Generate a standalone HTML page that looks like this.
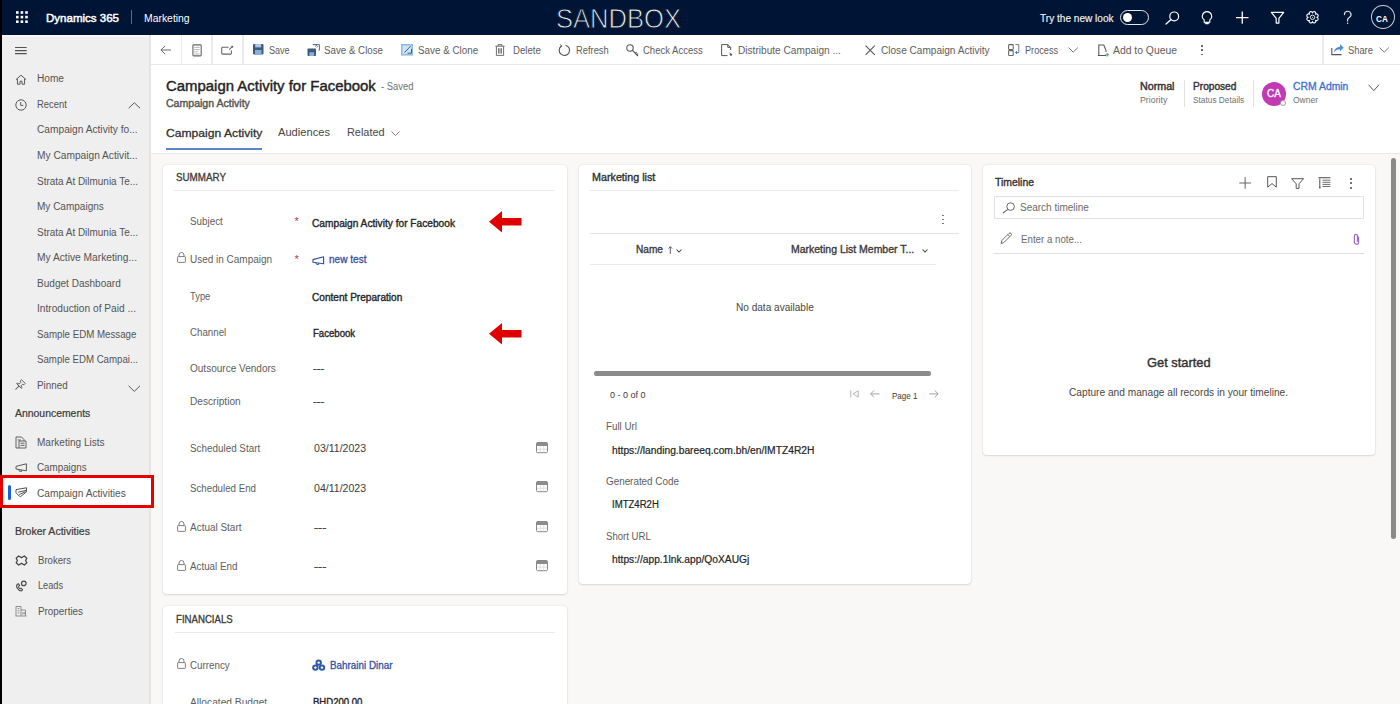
<!DOCTYPE html>
<html><head><meta charset="utf-8"><title>Campaign Activity</title>
<style>
*{box-sizing:border-box;margin:0;padding:0}
html,body{width:1400px;height:704px;overflow:hidden;background:#f9f8f7;font-family:"Liberation Sans",sans-serif;color:#323130;position:relative}
.abs{position:absolute}
.t{position:absolute;white-space:nowrap;line-height:1}
.card{position:absolute;background:#fff;border-radius:4px;box-shadow:0 0 2px rgba(0,0,0,0.12),0 1px 2px rgba(0,0,0,0.10)}
svg{position:absolute;overflow:visible}
</style></head><body>
<div class="abs" style="left:0px;top:0px;width:1400px;height:35px;background:#001535"></div>
<div class="abs" style="left:2px;top:35px;width:148px;height:669px;background:#efefef"></div>
<div class="abs" style="left:2px;top:35px;width:148px;height:2px;background:#f7f7f7"></div>
<div class="abs" style="left:149px;top:35px;width:2px;height:669px;background:#e4e4e4"></div>
<div class="abs" style="left:0px;top:0px;width:2px;height:704px;background:#000"></div>
<div class="abs" style="left:151px;top:35px;width:1249px;height:29px;background:#fff"></div>
<div class="abs" style="left:151px;top:64px;width:1249px;height:1px;background:#e6e6e6"></div>
<div class="abs" style="left:151px;top:65px;width:1249px;height:88px;background:#fff"></div>
<div class="abs" style="left:151px;top:153px;width:1249px;height:1px;background:#e9e8e7"></div>
<div class="card" style="left:163px;top:165px;width:404px;height:429px"></div>
<div class="card" style="left:163px;top:606px;width:404px;height:140px"></div>
<div class="card" style="left:578.5px;top:165px;width:392.5px;height:419px"></div>
<div class="card" style="left:983px;top:165px;width:392px;height:290px"></div>
<div class="abs" style="left:1391px;top:158px;width:5px;height:381px;background:#8a8a8a;border-radius:3px"></div>
<svg class="abs" style="left:0;top:0" width="40" height="34"><rect x="16.0" y="11.2" width="2.6" height="2.6" fill="#fff"/><rect x="16.0" y="15.8" width="2.6" height="2.6" fill="#fff"/><rect x="16.0" y="20.4" width="2.6" height="2.6" fill="#fff"/><rect x="20.6" y="11.2" width="2.6" height="2.6" fill="#fff"/><rect x="20.6" y="15.8" width="2.6" height="2.6" fill="#fff"/><rect x="20.6" y="20.4" width="2.6" height="2.6" fill="#fff"/><rect x="25.2" y="11.2" width="2.6" height="2.6" fill="#fff"/><rect x="25.2" y="15.8" width="2.6" height="2.6" fill="#fff"/><rect x="25.2" y="20.4" width="2.6" height="2.6" fill="#fff"/></svg>
<div class="t" style="left:45.7px;top:13.29px;font-size:11px;color:#fff;-webkit-text-stroke:0.45px #fff;transform:scaleX(1.0474);transform-origin:0 0;">Dynamics 365</div>
<div class="abs" style="left:131px;top:10px;width:1px;height:14px;background:#5a6b85"></div>
<div class="t" style="left:143.6px;top:14.00px;font-size:10.4px;color:#fff;transform:scaleX(1.0008);transform-origin:0 0;">Marketing</div>
<div class="t" style="left:555.5px;top:4.72px;font-size:27.5px;color:#ecece6;transform:scaleX(0.9295);transform-origin:0 0;-webkit-text-stroke:0.9px #001535;paint-order:normal;">SANDBOX</div>
<div class="t" style="left:1040.3px;top:13.97px;font-size:10.2px;color:#f2f2f2;-webkit-text-stroke:0.15px #f2f2f2;transform:scaleX(0.9899);transform-origin:0 0;">Try the new look</div>
<div class="abs" style="left:1119.7px;top:9.7px;width:29.2px;height:15.7px;border:1.3px solid #e8e8e8;border-radius:8px"></div>
<div class="abs" style="left:1122.6px;top:13.2px;width:9px;height:9px;background:#fff;border-radius:50%"></div>
<svg class="abs" style="left:1160px;top:6px;" width="24" height="24" viewBox="0 0 24 24" fill="none"><circle cx="14.2" cy="10.4" r="4.4" stroke="#fff" stroke-width="1.2"/><path d="M11.1 13.5 L6 18" stroke="#fff" stroke-width="1.3" stroke-linecap="round"/></svg>
<svg class="abs" style="left:1196px;top:6px;" width="22" height="22" viewBox="0 0 22 22" fill="none"><path d="M11 5.6 a4.6 4.6 0 0 1 2.8 8.3 v2.4 h-5.6 v-2.4 A4.6 4.6 0 0 1 11 5.6 z" stroke="#fff" stroke-width="1.1"/><path d="M8.6 16.9 h4.8 M9.4 17.6 h3.2" stroke="#fff" stroke-width="1.1"/></svg>
<svg class="abs" style="left:1232px;top:6px;" width="22" height="22" viewBox="0 0 22 22" fill="none"><path d="M4 11.7 h12.5 M10.25 5.6 v12.2" stroke="#fff" stroke-width="1.3"/></svg>
<svg class="abs" style="left:1268px;top:6px;" width="22" height="22" viewBox="0 0 22 22" fill="none"><path d="M3.4 6.3 h12.3 l-4.8 6 v4.8 h-2.7 v-4.8 z" stroke="#fff" stroke-width="1.2" stroke-linejoin="round"/></svg>
<svg class="abs" style="left:1300px;top:6px;" width="25" height="24" viewBox="0 0 25 24" fill="none"><path d="M16.80 11.30 A1.68 1.68 0 1 1 15.54 14.34 A1.68 1.68 0 1 1 12.50 15.60 A1.68 1.68 0 1 1 9.46 14.34 A1.68 1.68 0 1 1 8.20 11.30 A1.68 1.68 0 1 1 9.46 8.26 A1.68 1.68 0 1 1 12.50 7.00 A1.68 1.68 0 1 1 15.54 8.26 A1.68 1.68 0 1 1 16.80 11.30 Z" stroke="#fff" stroke-width="1.1" stroke-linejoin="round"/><circle cx="12.5" cy="11.3" r="2.2" stroke="#e8e8f0" stroke-width="1"/><circle cx="12.5" cy="11.3" r="0.5" fill="#fff"/></svg>
<svg class="abs" style="left:1340px;top:6px;" width="16" height="20" viewBox="0 0 16 20" fill="none"><path d="M4.4 8.6 A3.3 3.3 0 1 1 9.2 11.5 C8.1 12.2 7.6 12.8 7.6 14 V15" stroke="#e8e8f0" stroke-width="1.15" stroke-linecap="round"/><circle cx="7.6" cy="17.2" r="0.7" fill="#e8e8f0"/></svg>
<div class="abs" style="left:1370.5px;top:5.4px;width:24.2px;height:24px;border:1.3px solid #c8ccd4;border-radius:50%"></div>
<div class="t" style="left:1376.3px;top:14.67px;font-size:8.3px;color:#fff;font-weight:700;transform:scaleX(0.9843);transform-origin:0 0;">CA</div>
<svg class="abs" style="left:15px;top:44px;" width="12" height="12" viewBox="0 0 12 12" fill="none"><path d="M0 3.5 h11.7 M0 6.6 h11.7 M0 9.6 h11.7" stroke="#555" stroke-width="1.2"/></svg>
<div class="t" style="left:37.3px;top:74.44px;font-size:10px;color:#555453;transform:scaleX(1.0122);transform-origin:0 0;">Home</div>
<div class="t" style="left:37.3px;top:99.95px;font-size:10px;color:#555453;transform:scaleX(0.9405);transform-origin:0 0;">Recent</div>
<div class="t" style="left:37.3px;top:125.47px;font-size:10px;color:#555453;transform:scaleX(1.0179);transform-origin:0 0;">Campaign Activity fo...</div>
<div class="t" style="left:37.3px;top:151.00px;font-size:10px;color:#555453;transform:scaleX(1.0180);transform-origin:0 0;">My Campaign Activit...</div>
<div class="t" style="left:37.3px;top:176.52px;font-size:10px;color:#555453;transform:scaleX(0.9948);transform-origin:0 0;">Strata At Dilmunia Te...</div>
<div class="t" style="left:37.3px;top:202.03px;font-size:10px;color:#555453;transform:scaleX(1.0017);transform-origin:0 0;">My Campaigns</div>
<div class="t" style="left:37.3px;top:227.56px;font-size:10px;color:#555453;transform:scaleX(0.9948);transform-origin:0 0;">Strata At Dilmunia Te...</div>
<div class="t" style="left:37.3px;top:253.07px;font-size:10px;color:#555453;transform:scaleX(1.0224);transform-origin:0 0;">My Active Marketing...</div>
<div class="t" style="left:37.3px;top:278.60px;font-size:10px;color:#555453;transform:scaleX(1.0049);transform-origin:0 0;">Budget Dashboard</div>
<div class="t" style="left:37.3px;top:304.12px;font-size:10px;color:#555453;transform:scaleX(1.0177);transform-origin:0 0;">Introduction of Paid ...</div>
<div class="t" style="left:37.3px;top:329.64px;font-size:10px;color:#555453;transform:scaleX(0.9720);transform-origin:0 0;">Sample EDM Message</div>
<div class="t" style="left:37.3px;top:355.16px;font-size:10px;color:#555453;transform:scaleX(0.9667);transform-origin:0 0;">Sample EDM Campai...</div>
<div class="t" style="left:37.3px;top:380.68px;font-size:10px;color:#555453;transform:scaleX(0.9827);transform-origin:0 0;">Pinned</div>
<svg class="abs" style="left:15px;top:74px;" width="12" height="11" viewBox="0 0 12 11" fill="none"><path d="M1 5.6 L6 1.2 L11 5.6 M2.4 4.6 V10.2 H5 V7.2 H7 V10.2 H9.6 V4.6" stroke="#5a5958" stroke-width="1" stroke-linejoin="round"/></svg>
<svg class="abs" style="left:15px;top:98.5px;" width="12" height="12" viewBox="0 0 12 12" fill="none"><circle cx="6" cy="6" r="5.2" stroke="#5a5958" stroke-width="1"/><path d="M5.7 3 V6.4 H8.3" stroke="#5a5958" stroke-width="1"/></svg>
<svg class="abs" style="left:127.5px;top:102px;" width="13" height="7" viewBox="0 0 13 7" fill="none"><path d="M0.6 6.2 L6.3 0.8 L12 6.2" stroke="#5a5958" stroke-width="1"/></svg>
<svg class="abs" style="left:14px;top:377px;" width="14" height="15" viewBox="0 0 14 15" fill="none"><path d="M2.60 6.60 L3.23 5.96 L5.07 7.09 L6.77 5.39 L6.20 4.12 L7.55 2.78 L11.22 6.45 L9.88 7.80 L8.61 7.23 L6.91 8.93 L8.04 10.77 L7.40 11.40 Z" stroke="#5a5958" stroke-width="0.95" stroke-linejoin="round"/><path d="M5.00 9.00 L1.75 12.25" stroke="#5a5958" stroke-width="1.05" stroke-linecap="round"/></svg>
<svg class="abs" style="left:127.5px;top:384.5px;" width="13" height="8" viewBox="0 0 13 8" fill="none"><path d="M0.6 0.8 L6.3 6.4 L12 0.8" stroke="#5a5958" stroke-width="1"/></svg>
<div class="t" style="left:15.1px;top:408.97px;font-size:10.2px;color:#3b3a39;-webkit-text-stroke:0.2px #3b3a39;transform:scaleX(1.0228);transform-origin:0 0;">Announcements</div>
<div class="t" style="left:37.3px;top:438.14px;font-size:10px;color:#555453;transform:scaleX(1.0053);transform-origin:0 0;">Marketing Lists</div>
<div class="t" style="left:37.3px;top:463.44px;font-size:10px;color:#555453;transform:scaleX(0.9806);transform-origin:0 0;">Campaigns</div>
<svg class="abs" style="left:15px;top:435.5px;" width="12" height="13" viewBox="0 0 12 13" fill="none"><path d="M1 1 H6.5 L9 3.5 V5 M1 1 V12 H4 M9 5 H4 V12 H11 V5 Z M5.5 7.2 H9.5 M5.5 9.4 H9.5 M2.6 4 H6" stroke="#5a5958" stroke-width="0.95"/></svg>
<svg class="abs" style="left:15px;top:463.2px;" width="13" height="9.5" viewBox="0 0 13 9.5" fill="none"><path d="M1 3.4 L11.4 0.8 V7.8 L1 6 Z" stroke="#5a5958" stroke-width="1" stroke-linejoin="round"/><path d="M3.6 6.4 L4.6 8.4 H6.8 L6.6 7.1" stroke="#5a5958" stroke-width="0.95" stroke-linejoin="round"/></svg>
<div class="abs" style="left:2px;top:478px;width:149px;height:27.5px;background:#fff"></div>
<div class="abs" style="left:8px;top:485.2px;width:2.8px;height:14.6px;background:#1b5fe0;border-radius:2px"></div>
<svg class="abs" style="left:15px;top:486.5px;" width="13" height="11" viewBox="0 0 13 11" fill="none"><path d="M1 2.6 L11.5 0.8 V4.8 L5.6 9.6 L4.4 9.2 L1 5.8 Z M3 5.2 L11.2 3.4 M4.2 7.6 L10.6 4.6" stroke="#4a4948" stroke-width="0.95" stroke-linejoin="round"/></svg>
<div class="t" style="left:37.3px;top:488.84px;font-size:10px;color:#555453;transform:scaleX(1.0176);transform-origin:0 0;">Campaign Activities</div>
<div class="abs" style="left:0px;top:474.9px;width:153.6px;height:33.6px;border:3.2px solid #e60000"></div>
<div class="t" style="left:15.2px;top:527.17px;font-size:10.2px;color:#3b3a39;-webkit-text-stroke:0.2px #3b3a39;transform:scaleX(1.0337);transform-origin:0 0;">Broker Activities</div>
<div class="t" style="left:37.5px;top:555.93px;font-size:10px;color:#555453;transform:scaleX(0.9607);transform-origin:0 0;">Brokers</div>
<div class="t" style="left:37.5px;top:581.24px;font-size:10px;color:#555453;transform:scaleX(0.9176);transform-origin:0 0;">Leads</div>
<div class="t" style="left:37.5px;top:606.74px;font-size:10px;color:#555453;transform:scaleX(0.9873);transform-origin:0 0;">Properties</div>
<svg class="abs" style="left:14.5px;top:554.5px;" width="13" height="11" viewBox="0 0 13 11" fill="none"><path d="M3.6 1 L6.5 2.6 L9.4 1 L11.8 3.2 L10.6 5.5 L11.8 7.8 L9.4 10 L6.5 8.4 L3.6 10 L1.2 7.8 L2.4 5.5 L1.2 3.2 Z" stroke="#4a4948" stroke-width="1.3" stroke-linejoin="round"/></svg>
<svg class="abs" style="left:14.5px;top:579.5px;" width="13" height="12" viewBox="0 0 13 12" fill="none"><circle cx="8.8" cy="3.4" r="2.3" stroke="#4a4948" stroke-width="1.2"/><path d="M2.4 4.2 C0.4 6.4 2.8 10.6 6.4 11 L7.6 9.6 L6 8.2 L5 8.8 C3.8 8.2 3.4 7.2 3.6 6.2 L4.6 5.6 L3.6 3.8 Z" stroke="#4a4948" stroke-width="1.1" stroke-linejoin="round"/></svg>
<svg class="abs" style="left:15px;top:605px;" width="12" height="12" viewBox="0 0 12 12" fill="none"><path d="M1 11 V1.5 H6 V11 M6 5 H10.5 V11 M0.5 11 H11.5 M2.6 3.6 H4.4 M2.6 5.8 H4.4 M2.6 8 H4.4 M7.8 7 V9.4 M9.2 7 V9.4" stroke="#8a8988" stroke-width="0.95"/></svg>
<div class="abs" style="left:180.5px;top:35px;width:1.3px;height:29px;background:#ebebeb"></div>
<div class="abs" style="left:211.3px;top:35px;width:1.3px;height:29px;background:#ebebeb"></div>
<div class="abs" style="left:242.4px;top:35px;width:1.3px;height:29px;background:#ebebeb"></div>
<div class="abs" style="left:1322.4px;top:35px;width:1.3px;height:29px;background:#ebebeb"></div>
<svg class="abs" style="left:160px;top:45px;" width="12" height="10" viewBox="0 0 12 10" fill="none"><path d="M5.2 0.8 L0.9 5 L5.2 9.2 M0.9 5 H11" stroke="#6b6a69" stroke-width="1"/></svg>
<svg class="abs" style="left:191.5px;top:43.7px;" width="10" height="13" viewBox="0 0 10 13" fill="none"><rect x="0.9" y="0.9" width="8.3" height="11" rx="0.9" stroke="#666" stroke-width="1.1"/><path d="M3.2 3.4 H7.6 M3.2 5.6 H7.6 M3.2 7.8 H5.8 M3.2 10 H7.6" stroke="#999" stroke-width="0.75"/><path d="M2 3.4 H2.6 M2 5.6 H2.6 M2 7.8 H2.6 M2 10 H2.6" stroke="#777" stroke-width="0.8"/></svg>
<svg class="abs" style="left:220.5px;top:45px;" width="13" height="10" viewBox="0 0 13 10" fill="none"><path d="M7.6 2.2 H1.4 A0.8 0.8 0 0 0 0.7 3 V8.4 A0.8 0.8 0 0 0 1.4 9.1 H9.6 A0.8 0.8 0 0 0 10.4 8.4 V5.6 M8.2 4.6 L10.6 2.2" stroke="#666" stroke-width="1.05"/><circle cx="11.2" cy="1.7" r="1.05" fill="#555"/></svg>
<svg class="abs" style="left:252.8px;top:44.3px;" width="10.5" height="10.5" viewBox="0 0 10.5 10.5" fill="none"><rect x="0" y="0" width="10.5" height="10.5" rx="1" fill="#3d5a7a"/><rect x="2.2" y="0" width="6" height="3.4" fill="#a9c6e6"/><rect x="2" y="6" width="6.5" height="4.5" fill="#7fb0e0"/></svg>
<div class="t" style="left:269.0px;top:45.64px;font-size:10px;color:#5e5d5c;transform:scaleX(0.9038);transform-origin:0 0;">Save</div>
<svg class="abs" style="left:306.5px;top:43.5px;" width="13" height="12" viewBox="0 0 13 12" fill="none"><rect x="0.5" y="4.5" width="8.5" height="7.5" rx="0.8" fill="#3d5a7a"/><rect x="2.3" y="8.2" width="4.8" height="3.8" fill="#7fb0e0"/><path d="M6 1.2 V0.6 H12.4 V6.2 H11.6 M8 2.6 L10 0.8 M9.8 3.4 L11 2.2" stroke="#3d5a7a" stroke-width="0.9"/></svg>
<div class="t" style="left:324.0px;top:45.64px;font-size:10px;color:#5e5d5c;transform:scaleX(0.9738);transform-origin:0 0;">Save &amp; Close</div>
<svg class="abs" style="left:400.5px;top:44px;" width="12.5" height="12" viewBox="0 0 12.5 12" fill="none"><rect x="0" y="0" width="12" height="11.6" fill="#8fbde6"/><rect x="1.6" y="1.6" width="8.8" height="8.4" fill="#cfe3f5"/><path d="M3.5 8.5 L9.5 2.2 M6.5 9.2 H10.5 V5" stroke="#3d5a7a" stroke-width="1"/></svg>
<div class="t" style="left:417.6px;top:45.64px;font-size:10px;color:#5e5d5c;transform:scaleX(0.9829);transform-origin:0 0;">Save &amp; Clone</div>
<svg class="abs" style="left:495px;top:43.8px;" width="10" height="12" viewBox="0 0 10 12" fill="none"><path d="M0.4 2.2 H9.6 M3.2 2.2 V0.6 H6.8 V2.2 M1.4 2.2 V11.4 H8.6 V2.2 M3.6 4.2 V9.6 M5 4.2 V9.6 M6.4 4.2 V9.6" stroke="#666" stroke-width="0.95"/></svg>
<div class="t" style="left:512.7px;top:45.64px;font-size:10px;color:#5e5d5c;transform:scaleX(0.9652);transform-origin:0 0;">Delete</div>
<svg class="abs" style="left:557.5px;top:43.8px;" width="13" height="12.5" viewBox="0 0 13 12.5" fill="none"><path d="M3.4 2 A5.2 5.2 0 1 0 7.6 1.2" stroke="#555" stroke-width="1.1"/><path d="M2.2 0.4 L3.8 2.2 L1.8 3.6" stroke="#555" stroke-width="1"/></svg>
<div class="t" style="left:575.9px;top:45.64px;font-size:10px;color:#5e5d5c;transform:scaleX(0.9339);transform-origin:0 0;">Refresh</div>
<svg class="abs" style="left:626px;top:43.5px;" width="13" height="13" viewBox="0 0 13 13" fill="none"><circle cx="4" cy="4" r="3.2" stroke="#555" stroke-width="1.1"/><path d="M6.2 6.2 L12 12 M9.4 9.4 L10.6 8.2 M10.8 10.8 L12 9.6" stroke="#555" stroke-width="1.1"/></svg>
<div class="t" style="left:643.3px;top:45.64px;font-size:10px;color:#5e5d5c;transform:scaleX(0.9506);transform-origin:0 0;">Check Access</div>
<svg class="abs" style="left:721px;top:43.8px;" width="12" height="12.5" viewBox="0 0 12 12.5" fill="none"><path d="M0.6 0.6 H6.8 L9.6 3.4 V6 M0.6 0.6 V11.6 H6.5 M6.8 0.6 V3.4 H9.6" stroke="#555" stroke-width="1"/><circle cx="10" cy="10.6" r="1.2" fill="#555"/><path d="M8.4 8.6 L10 10.4" stroke="#555" stroke-width="0.9"/></svg>
<div class="t" style="left:737.7px;top:45.64px;font-size:10px;color:#5e5d5c;transform:scaleX(1.0117);transform-origin:0 0;">Distribute Campaign ...</div>
<svg class="abs" style="left:865.2px;top:44.6px;" width="10.5" height="10.5" viewBox="0 0 10.5 10.5" fill="none"><path d="M0.6 0.6 L9.8 9.8 M9.8 0.6 L0.6 9.8" stroke="#555" stroke-width="1.05"/></svg>
<div class="t" style="left:881.3px;top:45.64px;font-size:10px;color:#5e5d5c;transform:scaleX(1.0072);transform-origin:0 0;">Close Campaign Activity</div>
<svg class="abs" style="left:1007.5px;top:43.8px;" width="12" height="12.5" viewBox="0 0 12 12.5" fill="none"><rect x="0.6" y="0.6" width="4.6" height="4.8" rx="0.5" stroke="#666" stroke-width="1.05"/><rect x="0.6" y="6.6" width="4.6" height="4.8" rx="0.5" stroke="#666" stroke-width="1.05"/><path d="M7.4 0.6 H10.8 V7.6" stroke="#777" stroke-width="1"/><path d="M10.8 7.6 V8.6 H7.6 M9 7.2 L7.5 8.6 L9 10" stroke="#3a78c8" stroke-width="1"/></svg>
<div class="t" style="left:1024.9px;top:45.64px;font-size:10px;color:#5e5d5c;transform:scaleX(0.9163);transform-origin:0 0;">Process</div>
<svg class="abs" style="left:1067.5px;top:47px;" width="10.5" height="6" viewBox="0 0 10.5 6" fill="none"><path d="M0.6 0.6 L5.2 5.2 L9.8 0.6" stroke="#777" stroke-width="1"/></svg>
<svg class="abs" style="left:1096.5px;top:43.5px;" width="12.5" height="13" viewBox="0 0 12.5 13" fill="none"><path d="M0.8 11.4 H9 M1.8 11.4 V1 H6.8 L9 6.6 V8" stroke="#555" stroke-width="1.05"/><path d="M10.2 9 V12.6 M8.4 10.8 H12" stroke="#3a9a4a" stroke-width="0.9"/></svg>
<div class="t" style="left:1113.3px;top:45.64px;font-size:10px;color:#5e5d5c;transform:scaleX(1.0370);transform-origin:0 0;">Add to Queue</div>
<div class="abs" style="left:1200.9px;top:45px;width:1.7px;height:1.7px;background:#555;border-radius:50%"></div>
<div class="abs" style="left:1200.9px;top:49.4px;width:1.7px;height:1.7px;background:#555;border-radius:50%"></div>
<div class="abs" style="left:1200.9px;top:53.8px;width:1.7px;height:1.7px;background:#555;border-radius:50%"></div>
<svg class="abs" style="left:1331px;top:42.8px;" width="13" height="12.5" viewBox="0 0 13 12.5" fill="none"><path d="M0.8 5 V11.6 H10.6" stroke="#555" stroke-width="1.1"/><path d="M3 9.4 C3.4 5.6 6 4 9 4 V1 L12.6 4.8 L9 8.4 V6.2 C6.6 6.2 4.6 7.2 3 9.4 Z" fill="#4a8fd8"/></svg>
<div class="t" style="left:1347.7px;top:45.64px;font-size:10px;color:#5e5d5c;transform:scaleX(0.9331);transform-origin:0 0;">Share</div>
<svg class="abs" style="left:1379px;top:47px;" width="10.5" height="6" viewBox="0 0 10.5 6" fill="none"><path d="M0.6 0.6 L5.2 5.2 L9.8 0.6" stroke="#777" stroke-width="1"/></svg>
<div class="t" style="left:165.6px;top:78.95px;font-size:14px;color:#242424;-webkit-text-stroke:0.4px #242424;transform:scaleX(1.0657);transform-origin:0 0;">Campaign Activity for Facebook</div>
<div class="t" style="left:381.0px;top:82.33px;font-size:10px;color:#707070;transform:scaleX(0.9401);transform-origin:0 0;">- Saved</div>
<div class="t" style="left:165.6px;top:98.63px;font-size:10px;color:#555;-webkit-text-stroke:0.4px #555;transform:scaleX(1.0556);transform-origin:0 0;">Campaign Activity</div>
<div class="t" style="left:165.6px;top:127.77px;font-size:11.5px;color:#323130;-webkit-text-stroke:0.3px #323130;transform:scaleX(1.0547);transform-origin:0 0;">Campaign Activity</div>
<div class="t" style="left:277.5px;top:127.10px;font-size:11.1px;color:#484644;transform:scaleX(1.0032);transform-origin:0 0;">Audiences</div>
<div class="t" style="left:346.5px;top:127.27px;font-size:10.9px;color:#484644;transform:scaleX(1.0008);transform-origin:0 0;">Related</div>
<svg class="abs" style="left:390.5px;top:130.5px;" width="9" height="5.5" viewBox="0 0 9 5.5" fill="none"><path d="M0.5 0.5 L4.5 4.5 L8.5 0.5" stroke="#777" stroke-width="0.9"/></svg>
<div class="abs" style="left:166px;top:147.8px;width:96px;height:2px;background:#5b85c8"></div>
<div class="t" style="left:1139.7px;top:82.17px;font-size:10.2px;color:#323130;-webkit-text-stroke:0.4px #323130;transform:scaleX(1.0495);transform-origin:0 0;">Normal</div>
<div class="t" style="left:1139.7px;top:95.55px;font-size:8.8px;color:#707070;transform:scaleX(1.0007);transform-origin:0 0;">Priority</div>
<div class="abs" style="left:1183.5px;top:80.2px;width:1px;height:27px;background:#e1e1e1"></div>
<div class="t" style="left:1192.8px;top:82.17px;font-size:10.2px;color:#323130;-webkit-text-stroke:0.4px #323130;transform:scaleX(0.9940);transform-origin:0 0;">Proposed</div>
<div class="t" style="left:1192.8px;top:95.89px;font-size:8.4px;color:#707070;transform:scaleX(0.9918);transform-origin:0 0;">Status Details</div>
<div class="abs" style="left:1253px;top:80.2px;width:1px;height:27px;background:#e1e1e1"></div>
<div class="abs" style="left:1262.2px;top:82.2px;width:24px;height:24px;background:#c239b3;border-radius:50%"></div>
<div class="t" style="left:1267.4px;top:89.03px;font-size:10px;color:#fff;-webkit-text-stroke:0.3px #fff;transform:scaleX(0.9934);transform-origin:0 0;">CA</div>
<div class="abs" style="left:1279.9px;top:99.9px;width:6.4px;height:6.4px;background:#fff;border:1px solid #9a9a9a;border-radius:50%"></div>
<div class="t" style="left:1293.4px;top:82.03px;font-size:10px;color:#3b6fd4;-webkit-text-stroke:0.3px #3b6fd4;transform:scaleX(1.0385);transform-origin:0 0;">CRM Admin</div>
<div class="t" style="left:1293.4px;top:95.72px;font-size:8.6px;color:#707070;transform:scaleX(0.9909);transform-origin:0 0;">Owner</div>
<svg class="abs" style="left:1368px;top:83.5px;" width="12" height="8" viewBox="0 0 12 8" fill="none"><path d="M0.6 0.8 L5.8 6.6 L11 0.8" stroke="#555" stroke-width="1"/></svg>
<div class="t" style="left:175.6px;top:172.77px;font-size:10.2px;color:#3b3a39;-webkit-text-stroke:0.3px #3b3a39;transform:scaleX(0.9624);transform-origin:0 0;">SUMMARY</div>
<div class="abs" style="left:174px;top:190px;width:380px;height:1px;background:#edebe9"></div>
<div class="t" style="left:189.5px;top:217.03px;font-size:10px;color:#605e5c;transform:scaleX(0.9834);transform-origin:0 0;">Subject</div>
<div class="abs" style="left:295.2px;top:217.6px;width:3.2px;height:3.2px;background:transparent"></div>
<div class="t" style="left:294.4px;top:216.49px;font-size:11px;color:#c4314b;">*</div>
<div class="t" style="left:312.2px;top:218.63px;font-size:10px;color:#242424;-webkit-text-stroke:0.35px #242424;transform:scaleX(1.0169);transform-origin:0 0;">Campaign Activity for Facebook</div>
<svg class="abs" style="left:489px;top:211px;" width="33" height="22" viewBox="0 0 33 22" fill="none"><path d="M0 10.7 L13 0 V7 H32.5 V14.5 H13 V21.4 Z" fill="#e10000"/></svg>
<svg class="abs" style="left:177px;top:252px;" width="9" height="11" viewBox="0 0 9 11" fill="none"><path d="M2 4.6 V3 A2.5 2.5 0 0 1 7 3 V4.6" stroke="#777" stroke-width="0.95"/><rect x="0.6" y="4.6" width="7.8" height="5.8" rx="0.6" stroke="#777" stroke-width="0.95"/></svg>
<div class="t" style="left:189.5px;top:254.84px;font-size:10px;color:#605e5c;transform:scaleX(0.9980);transform-origin:0 0;">Used in Campaign</div>
<div class="t" style="left:294.4px;top:254.49px;font-size:11px;color:#c4314b;">*</div>
<svg class="abs" style="left:311.5px;top:255.5px;" width="13" height="9" viewBox="0 0 13 9" fill="none"><path d="M1 3.6 L11.6 0.8 V7.8 L1 6.2 Z" stroke="#3550a8" stroke-width="1.15" stroke-linejoin="round"/><path d="M3.6 6.6 L4.6 8.4 H6.8 L6.6 7.1" stroke="#3550a8" stroke-width="1" stroke-linejoin="round"/></svg>
<div class="t" style="left:329.4px;top:255.17px;font-size:10.2px;color:#3552a6;-webkit-text-stroke:0.3px #3552a6;transform:scaleX(0.9872);transform-origin:0 0;">new test</div>
<div class="t" style="left:189.5px;top:292.04px;font-size:10px;color:#605e5c;transform:scaleX(0.9364);transform-origin:0 0;">Type</div>
<div class="t" style="left:312.2px;top:293.04px;font-size:10px;color:#242424;-webkit-text-stroke:0.35px #242424;transform:scaleX(1.0089);transform-origin:0 0;">Content Preparation</div>
<div class="t" style="left:189.5px;top:327.64px;font-size:10px;color:#605e5c;transform:scaleX(0.9718);transform-origin:0 0;">Channel</div>
<div class="t" style="left:312.6px;top:329.04px;font-size:10px;color:#242424;-webkit-text-stroke:0.35px #242424;transform:scaleX(0.9586);transform-origin:0 0;">Facebook</div>
<svg class="abs" style="left:489px;top:323.4px;" width="33" height="22" viewBox="0 0 33 22" fill="none"><path d="M0 10.7 L13 0 V7 H32.5 V14.5 H13 V21.4 Z" fill="#e10000"/></svg>
<div class="t" style="left:189.5px;top:363.84px;font-size:10px;color:#605e5c;transform:scaleX(1.0023);transform-origin:0 0;">Outsource Vendors</div>
<div class="t" style="left:312.6px;top:363.84px;font-size:10px;color:#444;-webkit-text-stroke:0.3px #444;transform:scaleX(1.1411);transform-origin:0 0;">---</div>
<div class="t" style="left:189.5px;top:396.74px;font-size:10px;color:#605e5c;transform:scaleX(1.0136);transform-origin:0 0;">Description</div>
<div class="t" style="left:312.6px;top:396.74px;font-size:10px;color:#444;-webkit-text-stroke:0.3px #444;transform:scaleX(1.1411);transform-origin:0 0;">---</div>
<div class="t" style="left:189.5px;top:444.34px;font-size:10px;color:#605e5c;transform:scaleX(0.9865);transform-origin:0 0;">Scheduled Start</div>
<div class="t" style="left:314.3px;top:444.34px;font-size:10px;color:#3b3a39;transform:scaleX(1.0566);transform-origin:0 0;">03/11/2023</div>
<svg class="abs" style="left:536.0px;top:441.8px;" width="12" height="11.2" viewBox="0 0 12 11.2" fill="none"><rect x="0.5" y="0.5" width="11" height="10.2" rx="1.2" stroke="#858585" stroke-width="1"/><rect x="0.5" y="0.5" width="11" height="3.4" rx="1" fill="#8c8c8c"/><path d="M4.2 4 V10.4 M7.8 4 V10.4 M1 7.2 H11" stroke="#d6d6d6" stroke-width="0.7"/></svg>
<div class="t" style="left:189.5px;top:483.84px;font-size:10px;color:#605e5c;transform:scaleX(0.9730);transform-origin:0 0;">Scheduled End</div>
<div class="t" style="left:314.3px;top:483.84px;font-size:10px;color:#3b3a39;transform:scaleX(1.0566);transform-origin:0 0;">04/11/2023</div>
<svg class="abs" style="left:536.0px;top:481.09999999999997px;" width="12" height="11.2" viewBox="0 0 12 11.2" fill="none"><rect x="0.5" y="0.5" width="11" height="10.2" rx="1.2" stroke="#858585" stroke-width="1"/><rect x="0.5" y="0.5" width="11" height="3.4" rx="1" fill="#8c8c8c"/><path d="M4.2 4 V10.4 M7.8 4 V10.4 M1 7.2 H11" stroke="#d6d6d6" stroke-width="0.7"/></svg>
<svg class="abs" style="left:177px;top:520.6px;" width="9" height="11" viewBox="0 0 9 11" fill="none"><path d="M2 4.6 V3 A2.5 2.5 0 0 1 7 3 V4.6" stroke="#777" stroke-width="0.95"/><rect x="0.6" y="4.6" width="7.8" height="5.8" rx="0.6" stroke="#777" stroke-width="0.95"/></svg>
<div class="t" style="left:189.5px;top:522.83px;font-size:10px;color:#605e5c;transform:scaleX(0.9963);transform-origin:0 0;">Actual Start</div>
<div class="t" style="left:314.3px;top:522.83px;font-size:10px;color:#444;-webkit-text-stroke:0.3px #444;transform:scaleX(1.2212);transform-origin:0 0;">---</div>
<svg class="abs" style="left:536.0px;top:520.5px;" width="12" height="11.2" viewBox="0 0 12 11.2" fill="none"><rect x="0.5" y="0.5" width="11" height="10.2" rx="1.2" stroke="#858585" stroke-width="1"/><rect x="0.5" y="0.5" width="11" height="3.4" rx="1" fill="#8c8c8c"/><path d="M4.2 4 V10.4 M7.8 4 V10.4 M1 7.2 H11" stroke="#d6d6d6" stroke-width="0.7"/></svg>
<svg class="abs" style="left:177px;top:559.6px;" width="9" height="11" viewBox="0 0 9 11" fill="none"><path d="M2 4.6 V3 A2.5 2.5 0 0 1 7 3 V4.6" stroke="#777" stroke-width="0.95"/><rect x="0.6" y="4.6" width="7.8" height="5.8" rx="0.6" stroke="#777" stroke-width="0.95"/></svg>
<div class="t" style="left:189.5px;top:561.83px;font-size:10px;color:#605e5c;transform:scaleX(0.9801);transform-origin:0 0;">Actual End</div>
<div class="t" style="left:314.3px;top:561.83px;font-size:10px;color:#444;-webkit-text-stroke:0.3px #444;transform:scaleX(1.2212);transform-origin:0 0;">---</div>
<svg class="abs" style="left:536.0px;top:559.6px;" width="12" height="11.2" viewBox="0 0 12 11.2" fill="none"><rect x="0.5" y="0.5" width="11" height="10.2" rx="1.2" stroke="#858585" stroke-width="1"/><rect x="0.5" y="0.5" width="11" height="3.4" rx="1" fill="#8c8c8c"/><path d="M4.2 4 V10.4 M7.8 4 V10.4 M1 7.2 H11" stroke="#d6d6d6" stroke-width="0.7"/></svg>
<div class="t" style="left:175.7px;top:614.97px;font-size:10.2px;color:#3b3a39;-webkit-text-stroke:0.3px #3b3a39;transform:scaleX(0.9454);transform-origin:0 0;">FINANCIALS</div>
<div class="abs" style="left:174.6px;top:632.3px;width:380px;height:1px;background:#edebe9"></div>
<svg class="abs" style="left:177.2px;top:657.6px;" width="9" height="11" viewBox="0 0 9 11" fill="none"><path d="M2 4.6 V3 A2.5 2.5 0 0 1 7 3 V4.6" stroke="#777" stroke-width="0.95"/><rect x="0.6" y="4.6" width="7.8" height="5.8" rx="0.6" stroke="#777" stroke-width="0.95"/></svg>
<div class="t" style="left:189.6px;top:660.63px;font-size:10px;color:#605e5c;transform:scaleX(0.9786);transform-origin:0 0;">Currency</div>
<svg class="abs" style="left:311.5px;top:658.8px;" width="13.5" height="12.5" viewBox="0 0 13.5 12.5" fill="none"><circle cx="6.7" cy="3.6" r="3.2" fill="#2e5aa8"/><circle cx="3.4" cy="8.6" r="3.2" fill="#2e5aa8"/><circle cx="10" cy="8.6" r="3.2" fill="#2e5aa8"/><circle cx="6.7" cy="3.6" r="1.2" fill="#fff"/><circle cx="3.4" cy="8.6" r="1.2" fill="#fff"/><circle cx="10" cy="8.6" r="1.2" fill="#fff"/></svg>
<div class="t" style="left:329.6px;top:660.87px;font-size:10.2px;color:#3552a6;-webkit-text-stroke:0.3px #3552a6;transform:scaleX(0.9670);transform-origin:0 0;">Bahraini Dinar</div>
<div class="t" style="left:189.6px;top:697.53px;font-size:10px;color:#605e5c;transform:scaleX(1.0210);transform-origin:0 0;">Allocated Budget</div>
<div class="t" style="left:312.8px;top:698.03px;font-size:10px;color:#242424;-webkit-text-stroke:0.35px #242424;transform:scaleX(0.9536);transform-origin:0 0;">BHD200.00</div>
<div class="t" style="left:592.0px;top:172.63px;font-size:10px;color:#323130;-webkit-text-stroke:0.35px #323130;transform:scaleX(1.0746);transform-origin:0 0;">Marketing list</div>
<div class="abs" style="left:590.2px;top:190.3px;width:369px;height:1px;background:#edebe9"></div>
<div class="abs" style="left:941.8px;top:214.6px;width:1.8px;height:1.8px;background:#666;border-radius:50%"></div>
<div class="abs" style="left:941.8px;top:218.6px;width:1.8px;height:1.8px;background:#666;border-radius:50%"></div>
<div class="abs" style="left:941.8px;top:222.6px;width:1.8px;height:1.8px;background:#666;border-radius:50%"></div>
<div class="abs" style="left:590.2px;top:233px;width:369px;height:1.2px;background:#e6e4e2"></div>
<div class="t" style="left:635.8px;top:245.03px;font-size:10px;color:#3b3a39;-webkit-text-stroke:0.35px #3b3a39;transform:scaleX(1.0122);transform-origin:0 0;">Name</div>
<svg class="abs" style="left:667.6px;top:246.3px;" width="5" height="8.5" viewBox="0 0 5 8.5" fill="none"><path d="M2.3 0.7 V7.9 M0.5 2.5 L2.3 0.7 L4.1 2.5" stroke="#555" stroke-width="0.95"/></svg>
<svg class="abs" style="left:675.8px;top:248.6px;" width="6" height="4" viewBox="0 0 6 4" fill="none"><path d="M0.5 0.5 L3 3 L5.5 0.5" stroke="#444" stroke-width="1.05"/></svg>
<div class="t" style="left:790.8px;top:245.03px;font-size:10px;color:#3b3a39;-webkit-text-stroke:0.35px #3b3a39;transform:scaleX(1.0473);transform-origin:0 0;">Marketing List Member T...</div>
<svg class="abs" style="left:921.5px;top:248.6px;" width="6" height="4" viewBox="0 0 6 4" fill="none"><path d="M0.5 0.5 L3 3 L5.5 0.5" stroke="#444" stroke-width="1.05"/></svg>
<div class="abs" style="left:590.2px;top:263.7px;width:345.5px;height:1px;background:#edebe9"></div>
<div class="t" style="left:736.0px;top:303.44px;font-size:10px;color:#484644;transform:scaleX(1.0068);transform-origin:0 0;">No data available</div>
<div class="abs" style="left:594.3px;top:371.4px;width:337.2px;height:4.4px;background:#8a8a8a;border-radius:2.2px"></div>
<div class="t" style="left:610.2px;top:391.18px;font-size:9px;color:#3b3a39;transform:scaleX(0.9966);transform-origin:0 0;">0 - 0 of 0</div>
<svg class="abs" style="left:849.5px;top:390px;" width="9" height="8" viewBox="0 0 9 8" fill="none"><path d="M0.8 0.4 V7.4 M8.2 0.8 L3 3.9 L8.2 7 Z" stroke="#aaa" stroke-width="0.9" stroke-linejoin="round"/></svg>
<svg class="abs" style="left:870.3px;top:390px;" width="10" height="8" viewBox="0 0 10 8" fill="none"><path d="M4 0.5 L0.7 3.9 L4 7.3 M0.7 3.9 H9.5" stroke="#999" stroke-width="0.9"/></svg>
<div class="t" style="left:891.7px;top:391.69px;font-size:8.4px;color:#3b3a39;transform:scaleX(0.9578);transform-origin:0 0;">Page 1</div>
<svg class="abs" style="left:929.3px;top:390px;" width="10" height="8" viewBox="0 0 10 8" fill="none"><path d="M5.8 0.5 L9.1 3.9 L5.8 7.3 M9.1 3.9 H0.3" stroke="#999" stroke-width="0.9"/></svg>
<div class="t" style="left:605.8px;top:421.94px;font-size:10px;color:#605e5c;transform:scaleX(0.9790);transform-origin:0 0;">Full Url</div>
<div class="t" style="left:611.7px;top:446.04px;font-size:10px;color:#242424;transform:scaleX(1.0257);transform-origin:0 0;-webkit-text-stroke:0.2px #242424;">https://landing.bareeq.com.bh/en/IMTZ4R2H</div>
<div class="t" style="left:605.8px;top:476.64px;font-size:10px;color:#605e5c;transform:scaleX(0.9859);transform-origin:0 0;">Generated Code</div>
<div class="t" style="left:611.7px;top:500.44px;font-size:10px;color:#242424;transform:scaleX(0.9572);transform-origin:0 0;-webkit-text-stroke:0.2px #242424;">IMTZ4R2H</div>
<div class="t" style="left:605.8px;top:531.63px;font-size:10px;color:#605e5c;transform:scaleX(0.9596);transform-origin:0 0;">Short URL</div>
<div class="t" style="left:611.7px;top:555.33px;font-size:10px;color:#242424;transform:scaleX(1.0249);transform-origin:0 0;-webkit-text-stroke:0.2px #242424;">https://app.1lnk.app/QoXAUGj</div>
<div class="t" style="left:995.0px;top:178.13px;font-size:10px;color:#323130;-webkit-text-stroke:0.35px #323130;transform:scaleX(1.0423);transform-origin:0 0;">Timeline</div>
<svg class="abs" style="left:1239px;top:176.8px;" width="12.5" height="12" viewBox="0 0 12.5 12" fill="none"><path d="M0.3 6 H12 M6.15 0.2 V11.8" stroke="#666" stroke-width="1"/></svg>
<svg class="abs" style="left:1266.5px;top:176.2px;" width="10.5" height="12" viewBox="0 0 10.5 12" fill="none"><path d="M0.7 0.7 H9.3 V11.2 L5 7.6 L0.7 11.2 Z" stroke="#555" stroke-width="1" stroke-linejoin="round"/></svg>
<svg class="abs" style="left:1291px;top:177.5px;" width="13.5" height="11" viewBox="0 0 13.5 11" fill="none"><path d="M0.6 0.7 H12.6 L8 5.8 V10.4 H5.2 V5.8 Z" stroke="#555" stroke-width="1" stroke-linejoin="round"/></svg>
<svg class="abs" style="left:1318px;top:176.8px;" width="13" height="12" viewBox="0 0 13 12" fill="none"><path d="M0.4 0.7 H12.4" stroke="#555" stroke-width="1.1"/><path d="M1.8 1.5 V10.4" stroke="#555" stroke-width="1"/><circle cx="1.8" cy="10.6" r="0.9" fill="#555"/><path d="M4.5 3.2 H12.4 M4.5 5.3 H12.4 M4.5 7.4 H12.4 M4.5 9.5 H12.4" stroke="#666" stroke-width="0.95"/></svg>
<div class="abs" style="left:1349.5px;top:177.8px;width:2px;height:2px;background:#444;border-radius:50%"></div>
<div class="abs" style="left:1349.5px;top:182.4px;width:2px;height:2px;background:#444;border-radius:50%"></div>
<div class="abs" style="left:1349.5px;top:187px;width:2px;height:2px;background:#444;border-radius:50%"></div>
<div class="abs" style="left:994.3px;top:196.4px;width:369.3px;height:22.2px;border:1px solid #e3e1df;border-radius:1px"></div>
<svg class="abs" style="left:1001.5px;top:202.4px;" width="13.5" height="11.5" viewBox="0 0 13.5 11.5" fill="none"><circle cx="8.6" cy="4.6" r="3.8" stroke="#666" stroke-width="1"/><path d="M5.9 7.3 L0.9 11" stroke="#666" stroke-width="1.05"/></svg>
<div class="t" style="left:1020.0px;top:203.13px;font-size:10px;color:#6b6a69;transform:scaleX(0.9997);transform-origin:0 0;">Search timeline</div>
<svg class="abs" style="left:999.5px;top:231.6px;" width="13" height="12.5" viewBox="0 0 13 12.5" fill="none"><path d="M1.2 11.6 L1.8 8.6 L9 1.4 A1.4 1.4 0 0 1 11 3.4 L3.8 10.6 Z M7.8 2.6 L9.8 4.6" stroke="#666" stroke-width="0.95" stroke-linejoin="round"/></svg>
<div class="t" style="left:1020.7px;top:235.13px;font-size:10px;color:#6b6a69;transform:scaleX(0.9711);transform-origin:0 0;">Enter a note...</div>
<svg class="abs" style="left:1352.5px;top:232.6px;" width="7.5" height="12.5" viewBox="0 0 7.5 12.5" fill="none"><path d="M5.6 3.4 V9.2 A2.1 2.1 0 0 1 1.4 9.2 V2.8 A1.5 1.5 0 0 1 4.4 2.8 V8.8" stroke="#9b6fc0" stroke-width="1.2"/></svg>
<div class="abs" style="left:994.3px;top:253.3px;width:369.3px;height:1.2px;background:#e1dfdd"></div>
<div class="t" style="left:1147.0px;top:357.13px;font-size:12.6px;color:#323130;-webkit-text-stroke:0.4px #323130;transform:scaleX(1.0220);transform-origin:0 0;">Get started</div>
<div class="t" style="left:1069.4px;top:387.75px;font-size:10.1px;color:#484644;transform:scaleX(1.0063);transform-origin:0 0;">Capture and manage all records in your timeline.</div>
</body></html>
